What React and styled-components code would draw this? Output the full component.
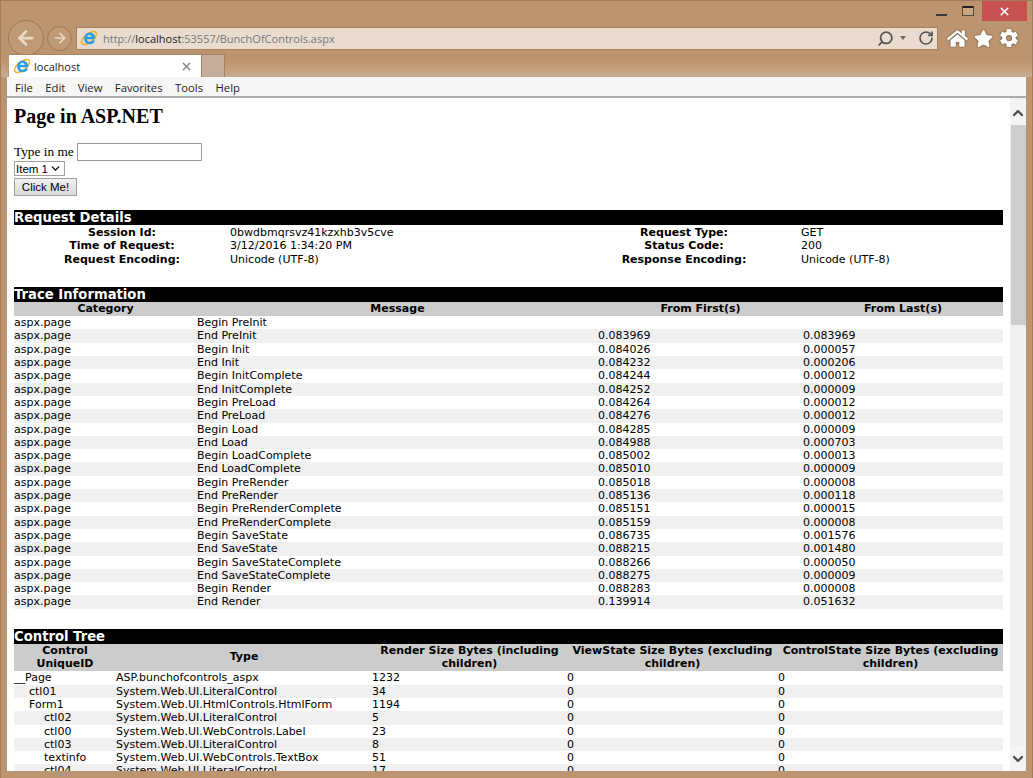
import React from 'react';
import styled, { createGlobalStyle } from 'styled-components';
import { ArrowLeft, ArrowRight, RotateCw, Search, X, ChevronUp, ChevronDown } from 'lucide-react';
import { FaHome, FaStar } from 'react-icons/fa';
import { IoSettingsSharp } from 'react-icons/io5';

const Global = createGlobalStyle`
  html, body { margin: 0; padding: 0; height: 100%; overflow: hidden; }
  * { box-sizing: border-box; }
`;

const Win = styled.div`
  width: 1033px; height: 778px; overflow: hidden; background: #bc9570;
  display: flex; flex-direction: column; border: 1px solid #a07c5a; border-bottom: 0;
`;
const TitleBar = styled.div`
  height: 21px; display: flex; justify-content: flex-end; align-items: flex-start; padding-right: 5px; flex: none;
`;
const WinBtn = styled.div`
  width: ${p => p.$w}px; height: 20px; display: flex; align-items: center; justify-content: center;
  background: ${p => p.$bg || 'transparent'}; color: #fff;
`;
const MinGlyph = styled.div` width: 11px; height: 2px; background: #3a3a3a; margin-top: 8px; `;
const MaxGlyph = styled.div`
  width: 12px; height: 10px; border: 1px solid #4a4a40; border-top: 2px solid #222; background: #c9a67f;
`;
const NavRow = styled.div`
  height: 32px; display: flex; align-items: center; padding-left: 7px; flex: none;
`;
const Circle = styled.div`
  width: ${p => p.$s}px; height: ${p => p.$s}px; flex: none; border-radius: 50%;
  border: 1px solid #9c7850; display: flex; align-items: center; justify-content: center;
  color: #e8d8c6; margin-right: ${p => p.$mr}px; background: #bf9a77;
`;
const Address = styled.div`
  width: 862px; height: 23px; flex: none; background: #e9dccf; border: 1px solid #a5835f;
  display: flex; align-items: center; padding: 0 3px 0 3px; gap: 5px; margin-right: 9px;
`;
const Url = styled.div`
  flex: 1; font: 11px "Open Sans", "Liberation Sans", sans-serif; color: #777; white-space: nowrap;
  b { font-weight: 400; color: #222; }
`;
const Caret = styled.div`
  width: 0; height: 0; border-left: 3px solid transparent; border-right: 3px solid transparent;
  border-top: 4px solid #666; margin: 0 7px 0 1px;
`;
const Tools = styled.div`
  display: flex; align-items: center; gap: 6px; color: #fff;
  svg { filter: drop-shadow(0 0 1px #5a4a3a); }
`;
const TabRow = styled.div`
  height: 23px; flex: none; display: flex; align-items: stretch; padding: 0 7px;
  background: linear-gradient(#bc9570 0, #bc9570 30%, #cbac90 100%);
`;
const Tab = styled.div`
  width: 194px; background: #fff; border: 1px solid #a5835f; border-bottom: 0; border-left-color: #bc9570;
  display: flex; align-items: center; padding: 0 8px 0 4px; gap: 3px;
  font: 11px "Open Sans", "Liberation Sans", sans-serif; color: #222;
`;
const TabLabel = styled.span` flex: 1; `;
const NewTab = styled.div`
  width: 23px; background: #c5ad9b; border: 1px solid #a5835f; border-bottom: 0; border-left: 0;
`;
const Menu = styled.div`
  height: 21px; flex: none; margin: 0 6px; background: #f6f6f6; border-bottom: 2px solid #ababab;
  display: flex; align-items: center; padding: 1px 0 0 8px; gap: 12.4px;
  font: 11.3px "Open Sans", "Liberation Sans", sans-serif; color: #222;
`;
const Body = styled.div`
  height: 673px; flex: none; margin: 0 6px; display: flex; background: #fff; overflow: hidden;
`;
const Page = styled.div`
  width: 1003px; flex: none; padding: 7px 7px 0 7px; overflow: hidden;
  font: 13.3px/15px "Liberation Serif", serif; color: #000;
`;
const Scroll = styled.div`
  flex: 1; background: #f0f0f0; display: flex; flex-direction: column; color: #505050; padding-top: 2px;
`;
const ScrollBtn = styled.div` height: 25px; flex: none; display: flex; align-items: center; justify-content: center; background: #f4f4f4; `;
const Thumb = styled.div` height: 200px; flex: none; background: #cdcdcd; margin-left: 1px; `;
const Spacer = styled.div` flex: 1; `;
const Title = styled.h1` margin: 0 0 15px; font: bold 20px/23px "Liberation Serif", serif; `;
const FormLine = styled.div` display: flex; align-items: center; height: 18px; gap: 3px; `;
const FormLabel = styled.span` margin-top: -2px; `;
const TextInput = styled.div` width: 125px; height: 18px; background: #fff; border: 1px solid #999; `;
const Select = styled.div`
  width: 51px; height: 15px; border: 1px solid #a0a0a0; margin-bottom: 2px; display: flex; align-items: center;
  justify-content: space-between; padding: 0 2px 0 1px; font: 11.5px "Liberation Sans", sans-serif;
`;
const Btn = styled.div`
  width: 63px; height: 18px; background: linear-gradient(#f2f2f2, #d8d8d8); border: 1px solid #a0a0a0;
  display: flex; align-items: center; justify-content: center; font: 11.5px "Liberation Sans", sans-serif;
`;
const Section = styled.section`
  margin-top: ${p => p.$mt}px; font: 11px/13.3px "DejaVu Sans", Verdana, sans-serif;
`;
const SectionHead = styled.div`
  background: #000; color: #fff; font-weight: bold; font-size: 13.2px; line-height: 15px; height: 15px; white-space: nowrap;
`;
const Row = styled.div`
  display: grid; grid-template-columns: ${p => p.$cols}; background: ${p => p.$alt ? '#f0f0f0' : 'transparent'};
  min-height: 13.3px; white-space: nowrap;
`;
const HeadRow = styled(Row)` background: #ccc; font-weight: bold; white-space: normal; padding-bottom: 1px; `;
const HeadCell = styled.div` text-align: center; align-self: center; `;
const Label = styled.div` text-align: center; font-weight: bold; `;
const Cell = styled.div` padding-left: ${p => (p.$depth || 0) * 15}px; `;
const DetailsBody = styled.div` padding-top: 1px; `;

const IE = ({ s = 20 }) => (
  <svg width={s} height={s} viewBox="0 0 20 20">
    <ellipse cx="10" cy="10" rx="10" ry="4.6" transform="rotate(-38 10 10)" fill="none" stroke="#f2b01e" strokeWidth="1.6" />
    <path d="M16.4 11.2H7.4c.2 2.2 1.6 3.4 3.4 3.4 1.4 0 2.4-.6 3-1.6h2.6c-.9 2.4-3 3.8-5.6 3.8-3.5 0-6-2.6-6-6.2 0-3.8 2.6-6.4 6.1-6.4 3.5 0 5.8 2.6 5.8 6.1 0 .3 0 .6-.3.9zM7.5 9h5.8c-.2-1.7-1.3-2.7-2.9-2.7S7.8 7.3 7.5 9z" fill="#2a9ce0" stroke="#2a9ce0" strokeWidth="0.5" />
  </svg>
);

const detCols = '216px 337px 234px 202px';
const details = [
  ['Session Id:', '0bwdbmqrsvz41kzxhb3v5cve', 'Request Type:', 'GET'],
  ['Time of Request:', '3/12/2016 1:34:20 PM', 'Status Code:', '200'],
  ['Request Encoding:', 'Unicode (UTF-8)', 'Response Encoding:', 'Unicode (UTF-8)'],
];
const traceCols = '183px 401px 205px 200px';
const trace = [
  ['Begin PreInit', '', ''], ['End PreInit', '0.083969', '0.083969'], ['Begin Init', '0.084026', '0.000057'],
  ['End Init', '0.084232', '0.000206'], ['Begin InitComplete', '0.084244', '0.000012'], ['End InitComplete', '0.084252', '0.000009'],
  ['Begin PreLoad', '0.084264', '0.000012'], ['End PreLoad', '0.084276', '0.000012'], ['Begin Load', '0.084285', '0.000009'],
  ['End Load', '0.084988', '0.000703'], ['Begin LoadComplete', '0.085002', '0.000013'], ['End LoadComplete', '0.085010', '0.000009'],
  ['Begin PreRender', '0.085018', '0.000008'], ['End PreRender', '0.085136', '0.000118'], ['Begin PreRenderComplete', '0.085151', '0.000015'],
  ['End PreRenderComplete', '0.085159', '0.000008'], ['Begin SaveState', '0.086735', '0.001576'], ['End SaveState', '0.088215', '0.001480'],
  ['Begin SaveStateComplete', '0.088266', '0.000050'], ['End SaveStateComplete', '0.088275', '0.000009'], ['Begin Render', '0.088283', '0.000008'],
  ['End Render', '0.139914', '0.051632'],
];
const treeCols = '102px 256px 195px 211px 225px';
const tree = [
  [0, '__Page', 'ASP.bunchofcontrols_aspx', '1232'],
  [1, 'ctl01', 'System.Web.UI.LiteralControl', '34'],
  [1, 'Form1', 'System.Web.UI.HtmlControls.HtmlForm', '1194'],
  [2, 'ctl02', 'System.Web.UI.LiteralControl', '5'],
  [2, 'ctl00', 'System.Web.UI.WebControls.Label', '23'],
  [2, 'ctl03', 'System.Web.UI.LiteralControl', '8'],
  [2, 'textinfo', 'System.Web.UI.WebControls.TextBox', '51'],
  [2, 'ctl04', 'System.Web.UI.LiteralControl', '17'],
];

export default function App() {
  return (
    <Win>
      <Global />
      <TitleBar>
        <WinBtn $w={33}><MinGlyph /></WinBtn>
        <WinBtn $w={20}><MaxGlyph /></WinBtn>
        <WinBtn $w={4} />
        <WinBtn $w={45} $bg="#c75050"><X size={13} strokeWidth={3} /></WinBtn>
      </TitleBar>
      <NavRow>
        <Circle $s={36} $mr={3}><ArrowLeft size={22} strokeWidth={3} /></Circle>
        <Circle $s={25} $mr={4}><ArrowRight size={16} strokeWidth={2.5} /></Circle>
        <Address>
          <IE s={18} />
          <Url>http://<b>localhost</b>:53557/BunchOfControls.aspx</Url>
          <Search size={17} color="#555" strokeWidth={2.5} style={{ transform: 'scaleX(-1)' }} />
          <Caret />
          <RotateCw size={16} color="#555" strokeWidth={2.5} />
        </Address>
        <Tools>
          <FaHome size={21} />
          <FaStar size={19} />
          <IoSettingsSharp size={20} />
        </Tools>
      </NavRow>
      <TabRow>
        <Tab>
          <IE s={18} />
          <TabLabel>localhost</TabLabel>
          <X size={13} color="#888" strokeWidth={2.5} />
        </Tab>
        <NewTab />
      </TabRow>
      <Menu>
        {['File', 'Edit', 'View', 'Favorites', 'Tools', 'Help'].map(m => <span key={m}>{m}</span>)}
      </Menu>
      <Body>
        <Page>
          <Title>Page in ASP.NET</Title>
          <FormLine><FormLabel>Type in me</FormLabel> <TextInput /></FormLine>
          <Select>Item 1 <ChevronDown size={13} strokeWidth={2.5} /></Select>
          <Btn>Click Me!</Btn>
          <Section $mt={14}>
            <SectionHead>Request Details</SectionHead>
            <DetailsBody>
              {details.map(d => (
                <Row key={d[0]} $cols={detCols}>
                  <Label>{d[0]}</Label><Cell>{d[1]}</Cell><Label>{d[2]}</Label><Cell>{d[3]}</Cell>
                </Row>
              ))}
            </DetailsBody>
          </Section>
          <Section $mt={21}>
            <SectionHead>Trace Information</SectionHead>
            <HeadRow $cols={traceCols}>
              <HeadCell>Category</HeadCell><HeadCell>Message</HeadCell><HeadCell>From First(s)</HeadCell><HeadCell>From Last(s)</HeadCell>
            </HeadRow>
            {trace.map((t, i) => (
              <Row key={t[0]} $cols={traceCols} $alt={i % 2 === 1}>
                <Cell>aspx.page</Cell><Cell>{t[0]}</Cell><Cell>{t[1]}</Cell><Cell>{t[2]}</Cell>
              </Row>
            ))}
          </Section>
          <Section $mt={20}>
            <SectionHead>Control Tree</SectionHead>
            <HeadRow $cols={treeCols}>
              <HeadCell>Control UniqueID</HeadCell><HeadCell>Type</HeadCell>
              <HeadCell>Render Size Bytes (including children)</HeadCell>
              <HeadCell>ViewState Size Bytes (excluding children)</HeadCell>
              <HeadCell>ControlState Size Bytes (excluding children)</HeadCell>
            </HeadRow>
            {tree.map((t, i) => (
              <Row key={i} $cols={treeCols} $alt={i % 2 === 1}>
                <Cell $depth={t[0]}>{t[1]}</Cell><Cell>{t[2]}</Cell><Cell>{t[3]}</Cell><Cell>0</Cell><Cell>0</Cell>
              </Row>
            ))}
          </Section>
        </Page>
        <Scroll>
          <ScrollBtn><ChevronUp size={16} strokeWidth={3.5} /></ScrollBtn>
          <Thumb />
          <Spacer />
          <ScrollBtn><ChevronDown size={16} strokeWidth={3.5} /></ScrollBtn>
        </Scroll>
      </Body>
    </Win>
  );
}
